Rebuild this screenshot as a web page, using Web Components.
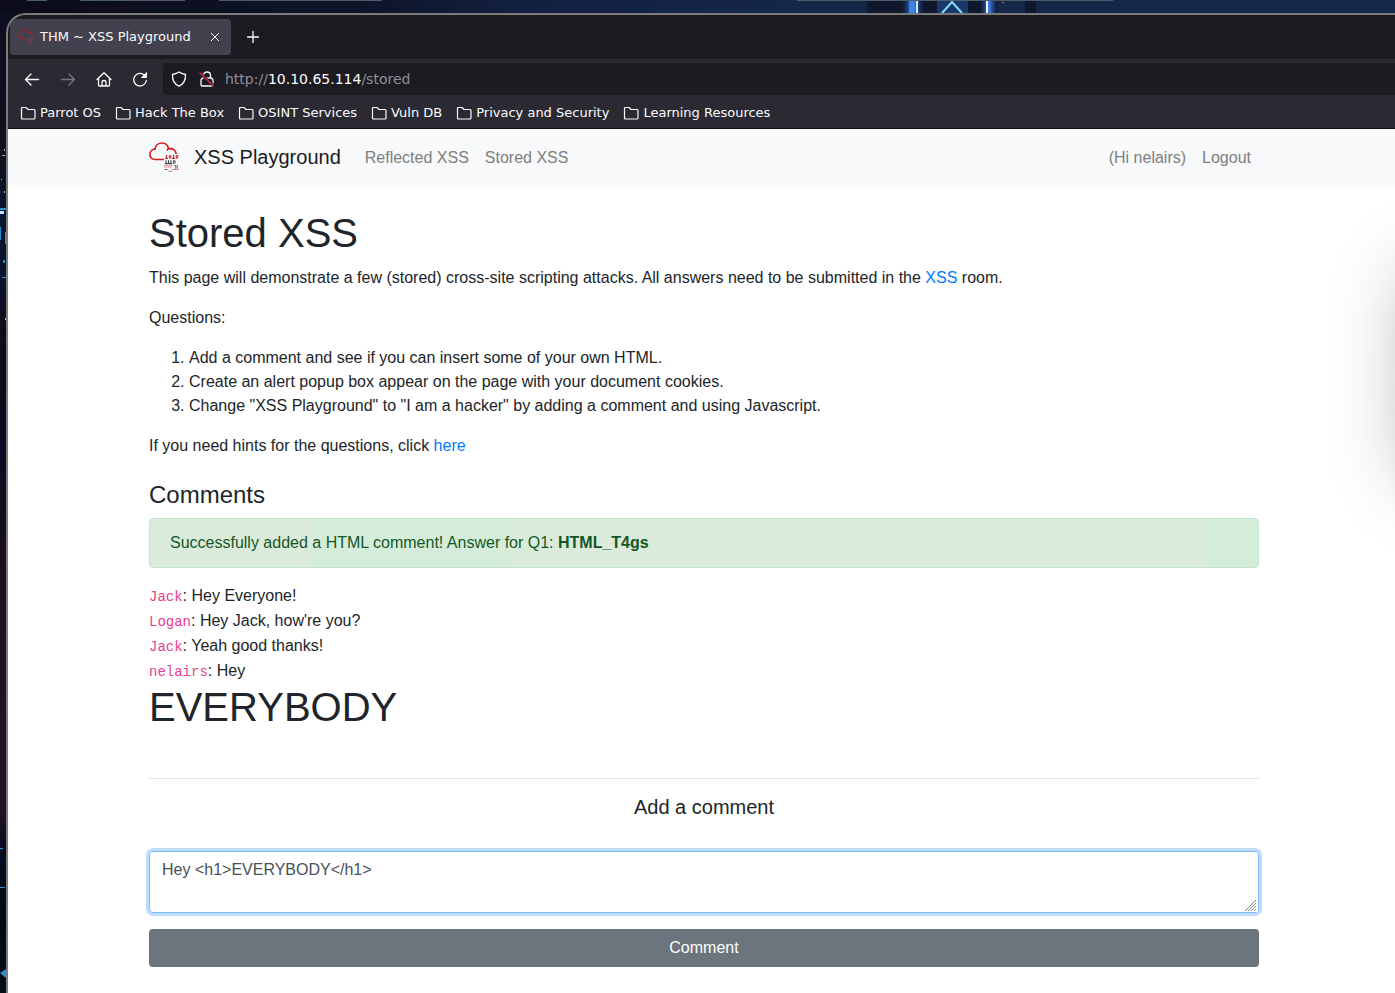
<!DOCTYPE html>
<html lang="en">
<head>
<meta charset="utf-8">
<title>THM ~ XSS Playground</title>
<style>
html, body { margin: 0; height: 100%; }
body { font-family: "Liberation Sans", Arial, sans-serif; font-size: 16px; line-height: 1.5; color: #212529; overflow: hidden; }
</style>
</head>
<body>
<desktop-wallpaper>
  <browser-window>
    <browser-tab slot="tabs">THM ~ XSS Playground</browser-tab>
    <url-bar slot="address" scheme="http://" host="10.10.65.114" path="/stored"></url-bar>
    <book-mark slot="bookmarks">Parrot OS</book-mark>
    <book-mark slot="bookmarks">Hack The Box</book-mark>
    <book-mark slot="bookmarks">OSINT Services</book-mark>
    <book-mark slot="bookmarks">Vuln DB</book-mark>
    <book-mark slot="bookmarks">Privacy and Security</book-mark>
    <book-mark slot="bookmarks">Learning Resources</book-mark>
    <site-navbar></site-navbar>
    <stored-page></stored-page>
  </browser-window>
</desktop-wallpaper>
<script>
function define(name, html, setup) {
  const template = document.createElement('template');
  template.innerHTML = html;
  customElements.define(name, class extends HTMLElement {
    constructor() {
      super();
      this.attachShadow({ mode: 'open' }).append(template.content.cloneNode(true));
    }
    connectedCallback() { if (setup) setup(this, this.shadowRoot); }
  });
}

const cloud = `<path d="M15 17.500H6C2.800 17.500.900 15.200.900 12.500 .900 9.500 3 7.200 6 7.200 6.500 3.500 9.500 1 13 1 16.500 1 19 3.300 19.500 6.800 23.600 5.800 26.900 8.200 27.200 12M19.500 6.800Q18.600 7.300 18 8.600" fill="none" stroke="currentColor" stroke-width="1.700"/>`;

define('desktop-wallpaper', `
<style>
:host { display: flex; flex-direction: column; position: relative; height: 100vh; overflow: hidden;
  background: linear-gradient(#0e1020 0, #0d0c20 60px, #12101c 140px, #07172e 220px, #08142e 270px, #120a1c 330px, #0c0a20 450px, #22101f 650px, #251222 810px, #050c20 850px, #020812 930px, #020f1c 100%); }
.skyline { position: absolute; inset: 0; width: 100%; height: 100%; }
slot { display: contents; }
</style>
<svg class="skyline" aria-hidden="true">
  <defs>
    <linearGradient id="g"><stop offset="0" stop-color="#1c4aa0" stop-opacity="0"/><stop offset=".5" stop-color="#3f82f0"/><stop offset="1" stop-color="#1c4aa0" stop-opacity="0"/></linearGradient>
    <linearGradient id="sky" gradientUnits="userSpaceOnUse" x1="0" x2="800" y1="0" y2="0"><stop offset="0" stop-color="#0c0c1a"/><stop offset=".45" stop-color="#0e1428"/><stop offset=".65" stop-color="#122040"/><stop offset="1" stop-color="#152748"/></linearGradient>
  </defs>
  <rect width="100%" height="14" fill="url(#sky)"/>
  <rect x="867" width="169" height="14" fill="#10172c"/>
  <rect x="937" width="31" height="14" fill="#16386a"/>
  <rect x="998" width="27" height="14" fill="#152848"/>
  <rect x="902" width="22" height="14" fill="url(#g)"/><rect x="909" width="6" height="14" fill="#3f7fe8"/><rect x="916" width="2" height="14" fill="#d5ecff"/>
  <rect x="980" width="18" height="14" fill="url(#g)"/><rect x="986" width="2" height="14" fill="#f0f8ff"/>
  <path d="M942 13L952 2L962 13" stroke="#8adcf3" stroke-width="2" fill="none"/>
  <path d="M27 0h20M80 0h105M219 0h163M797 0h316" stroke="#4a5d68" stroke-width="2"/>
  <rect x="1002" y="2" width="2" height="1" fill="#c8684a"/>
  <g fill="#c5b2a0"><rect x="4" y="149" width="1" height="2"/><rect x="2" y="155" width="3" height="1"/><rect x="1" y="179" width="1" height="1"/><rect x="4" y="191" width="1" height="2"/><rect x="5" y="318" width="1" height="2"/></g>
  <g fill="#2693cf"><rect y="208" width="6" height="2"/><rect y="211" width="4" height="3" fill="#b6e8ff"/><rect y="227" width="1" height="13"/><rect x="5" y="232" width="1" height="12"/><rect x="3" y="260" width="2" height="3"/><rect x="2" y="277" width="4" height="1"/><rect y="848" width="3" height="1"/><rect y="887" width="5" height="1"/><path d="M6 969L0 973L6 978Z"/></g>
</svg>
<slot></slot>`);

define('browser-window', `
<style>
:host { display: flex; flex-direction: column; flex: 1; position: relative; margin: 13px -5px 0 6px;
  border: 2px solid #7d7b79; border-width: 2px 0 0 2px; border-radius: 20px 0 0 0; overflow: hidden; background: #fff; }
.chrome { font: 13px/20px "DejaVu Sans", sans-serif; color: #fbfbfe; background: #2b2a33; border-bottom: 1px solid #0c0c0d; }
.strip { display: flex; align-items: center; height: 44px; padding-left: 2px; background: #1c1b22; }
button { display: grid; place-items: center; width: 32px; height: 32px; margin: 0; padding: 0; border: 0; background: none; color: inherit; }
.strip button { margin-left: 6px; }
.toolbar { display: flex; align-items: center; gap: 4px; height: 40px; padding-left: 8px; }
.toolbar button:disabled { color: #77767d; }
.toolbar ::slotted(*) { flex: 1; margin-left: 3px; }
.marks { display: flex; align-items: center; gap: 14px; height: 28px; padding: 0 0 1px 12px; }
svg { display: block; fill: none; stroke: currentColor; stroke-width: 1.300; stroke-linecap: round; stroke-linejoin: round; }
</style>
<header class="chrome">
  <div class="strip"><slot name="tabs"></slot>
    <button aria-label="New tab"><svg width="16" height="16"><path d="M8 2.500v11M2.500 8h11"/></svg></button></div>
  <nav class="toolbar" aria-label="Navigation">
    <button aria-label="Back"><svg width="16" height="16"><path d="M14.500 8.500h-13M7 3L1.500 8.500L7 14"/></svg></button>
    <button aria-label="Forward" disabled><svg width="16" height="16"><path d="M1.500 8.500h13M9 3L14.500 8.500L9 14"/></svg></button>
    <button aria-label="Home"><svg width="16" height="16"><path d="M1 8.500L8 1.800L15 8.500M2.500 7.500v6.500q0 1 1 1h9q1 0 1-1V7.500M6 15v-4q0-1.500 2-1.500t2 1.500v4"/></svg></button>
    <button aria-label="Reload"><svg width="16" height="16"><path d="M14.300 9.500A6.300 6.300 0 1 1 12.500 4.200"/><path d="M14.500 2v4.500h-4.500z" fill="currentColor" stroke-width="1"/></svg></button>
    <slot name="address"></slot>
  </nav>
  <nav class="marks" aria-label="Bookmarks"><slot name="bookmarks"></slot></nav>
</header>
<slot></slot>`);

define('browser-tab', `
<style>
:host { display: flex; align-items: center; box-sizing: border-box; width: 221px; height: 36px; padding: 0 8px; border-radius: 4px; background: #42414d; }
.icon { width: 16px; height: 16px; margin-right: 6px; color: #c31720; }
.title { flex: 1; white-space: nowrap; }
button { display: grid; place-items: center; width: 16px; height: 16px; padding: 0; border: 0; background: none; color: #fbfbfe; }
</style>
<svg class="icon" viewBox="0 0 30 30" aria-hidden="true">${cloud}<path d="M17 18h5M24 18h4M17 22h8M20 26h8" stroke="#85404a" stroke-width="2"/></svg>
<span class="title"><slot></slot></span>
<button aria-label="Close tab"><svg width="10" height="10" fill="none" stroke="currentColor"><path d="M1 1l8 8M9 1L1 9"/></svg></button>`);

define('url-bar', `
<style>
:host { display: flex; align-items: center; height: 32px; padding-left: 8px; border-radius: 4px 0 0 4px; background: #1c1b22; font-size: 14px; }
svg { width: 16px; height: 16px; margin-right: 12px; fill: none; stroke: #fbfbfe; stroke-width: 1.300; stroke-linejoin: round; stroke-linecap: round; }
svg + svg { margin-right: 10px; }
.url { flex: 1; color: #8f8f96; outline: 0; white-space: nowrap; }
.host { color: #fbfbfe; }
</style>
<svg aria-hidden="true"><path d="M8 1C6 2.500 4 3 1.500 3.500C1.200 9 3 13 8 15.200C13 13 14.800 9 14.500 3.500C12 3 10 2.500 8 1Z"/></svg>
<svg aria-hidden="true"><path d="M4.500 7V4.500Q4.500 1 8 1T11.500 4.500V7M3.500 7H12.500L14 9V14Q14 15 13 15H3Q2 15 2 14V9Z"/><path d="M1 2L15 15" stroke="#1c1b22" stroke-width="3"/><path d="M1 2L14.500 15" stroke="#e22850"/></svg>
<div class="url" role="textbox" aria-label="Address" contenteditable="true" spellcheck="false"><span class="scheme"></span><span class="host"></span><span class="path"></span></div>`,
(el, root) => { for (const part of ['scheme', 'host', 'path']) root.querySelector('.' + part).textContent = el.getAttribute(part); });

define('book-mark', `
<style>
:host { display: block; }
a { display: flex; align-items: center; gap: 4px; color: #fbfbfe; text-decoration: none; white-space: nowrap; }
svg { display: block; fill: none; stroke: currentColor; stroke-width: 1.200; stroke-linejoin: round; }
</style>
<a href="#"><svg width="16" height="16" aria-hidden="true"><path d="M1.500 3.500Q1.500 2.500 2.500 2.500H6L8 4.500H14Q15 4.500 15 5.500V13Q15 14 14 14H2.500Q1.500 14 1.500 13Z"/></svg><span><slot></slot></span></a>`);

define('site-navbar', `
<style>
:host { display: block; background: #f8f9fa; }
nav { display: flex; align-items: center; box-sizing: border-box; max-width: 1140px; height: 56px; margin: 0 auto; padding: 0 15px; }
a, span { color: #7d7e7e; text-decoration: none; padding: 2px 8px 0; white-space: nowrap; }
.brand { display: flex; align-items: center; gap: 15px; margin-right: 16px; padding: 0; font-size: 20px; line-height: 30px; color: #1a1b1c; }
.brand svg { display: block; color: #cf1b22; }
.right { margin-left: auto; }
</style>
<nav>
  <a class="brand" href="#"><svg width="30" height="30" viewBox="0 0 30 30" aria-hidden="true">${cloud}
    <g fill="none" stroke="#c2242b" stroke-width="1.200"><path d="M17.500 13v3.500M16 16.500h3M24.500 13v3.500M23 16.500h3"/><path d="M20.300 13.500h1.500v2.600h-1.500zM27.200 13.500h1.500v2.600h-1.500z" stroke-width="1"/></g>
    <g fill="none" stroke="#3a3f42"><path d="M17 18.200v3.500M19.500 18.200v3.500M22 18.200v3.500M16 21.500h7" stroke-width="1.100"/><path d="M24.500 18.700h1.500v2.600h-1.500z" stroke-width=".9"/></g>
    <g fill="none" stroke="#6b5a5d"><path d="M25.500 23.500h3.500" stroke-dasharray="1.500 .8"/><path d="M26 25h3M15.500 27.500h3"/></g>
    <g stroke="#cc4a50" fill="none"><path d="M15.500 23.200h7.500M23.500 27.500h6M26 26.200h3" stroke-dasharray="1.600 .6"/><path d="M15.500 25h7.500" stroke-dasharray="1 .8"/><path d="M19.500 29.300h3.500" stroke-dasharray="2 .5"/></g></svg>XSS Playground</a>
  <a href="#">Reflected XSS</a><a href="#">Stored XSS</a>
  <span class="right">(Hi nelairs)</span><a href="#">Logout</a>
</nav>`);

define('user-comment', `
<style>
:host { display: block; }
code { font-family: "Liberation Mono", monospace; font-size: 14px; color: #e83e8c; }
</style>
<code></code>: <slot></slot>`, (el, root) => { root.querySelector('code').textContent = el.getAttribute('author'); });

define('success-alert', `
<style>
:host { display: block; margin-bottom: 16px; padding: 12px 20px; border: 1px solid #c3e6cb; border-radius: 4px; background: linear-gradient(90deg, #daeadb 0 163px, #d4edda 163px 358px, #daeadb 358px calc(100% - 50px), #d4edda calc(100% - 50px)); color: #155724; }
</style>
<div role="status"><slot></slot></div>`);

define('comment-form', `
<style>
:host { display: block; }
form { display: flex; flex-direction: column; gap: 16px; }
label { text-align: center; font-size: 20px; line-height: 24px; margin-bottom: 16px; }
textarea { box-sizing: border-box; height: 62px; margin: 0; padding: 6px 12px; border: 1px solid #80bdff; border-radius: 4px; outline: 0; box-shadow: 0 0 0 3px #bfdeff; font: inherit; color: #495057; background: #fff; resize: vertical; }
textarea::-webkit-resizer { background: linear-gradient(#fff, #fff) right / 2px 100% no-repeat, linear-gradient(#fff, #fff) bottom / 100% 1px no-repeat, linear-gradient(135deg, #fff 0 50%, transparent 50%), repeating-linear-gradient(135deg, #fff 0 1px, #888 1px 2px); }
button { height: 38px; padding: 6px 12px; border: 0; border-radius: 4px; background: #6c757d; color: #fff; font: inherit; line-height: 24px; }
</style>
<form>
  <label for="comment">Add a comment</label>
  <textarea id="comment" rows="2" spellcheck="false">Hey &lt;h1&gt;EVERYBODY&lt;/h1&gt;</textarea>
  <button type="button">Comment</button>
</form>`);

define('stored-page', `
<style>
:host { display: block; flex: 1; position: relative; overflow: hidden; background: #fff; }
main { box-sizing: border-box; max-width: 1140px; margin: 0 auto; padding: 24px 15px 0; }
h1, h2 { margin: 0 0 9px; font-weight: 400; }
h1 { font-size: 40px; line-height: 48px; }
h2 { font-size: 24px; line-height: 29px; margin-top: 22px; }
p { margin: 0 0 16px; }
ol { margin: 0 0 16px; padding-left: 40px; }
a { color: #007bff; text-decoration: none; }
.comments { display: grid; gap: 1px; }
.comments h1 { margin: 0; }
hr { margin: 47px 0 16px; border: 0; border-top: 1px solid #e5e5e5; }
/* soft shadow cast by a neighbouring window past the right edge */
.cast { position: absolute; top: 85px; right: -110px; width: 100px; height: 210px; border-radius: 20px; box-shadow: 0 0 80px rgba(0,0,0,.3), 0 20px 30px rgba(0,0,0,.06); }
</style>
<div class="cast" aria-hidden="true"></div>
<main>
  <h1>Stored XSS</h1>
  <p>This page will demonstrate a few (stored) cross-site scripting attacks. All answers need to be submitted in the <a href="#">XSS</a> room.</p>
  <p>Questions:</p>
  <ol>
    <li>Add a comment and see if you can insert some of your own HTML.</li>
    <li>Create an alert popup box appear on the page with your document cookies.</li>
    <li>Change "XSS Playground" to "I am a hacker" by adding a comment and using Javascript.</li>
  </ol>
  <p>If you need hints for the questions, click <a href="#">here</a></p>
  <h2>Comments</h2>
  <success-alert>Successfully added a HTML comment! Answer for Q1: <b>HTML_T4gs</b></success-alert>
  <section class="comments">
    <user-comment author="Jack">Hey Everyone!</user-comment>
    <user-comment author="Logan">Hey Jack, how're you?</user-comment>
    <user-comment author="Jack">Yeah good thanks!</user-comment>
    <user-comment author="nelairs">Hey <h1>EVERYBODY</h1></user-comment>
  </section>
  <hr>
  <comment-form></comment-form>
</main>`);
</script>
</body>
</html>
